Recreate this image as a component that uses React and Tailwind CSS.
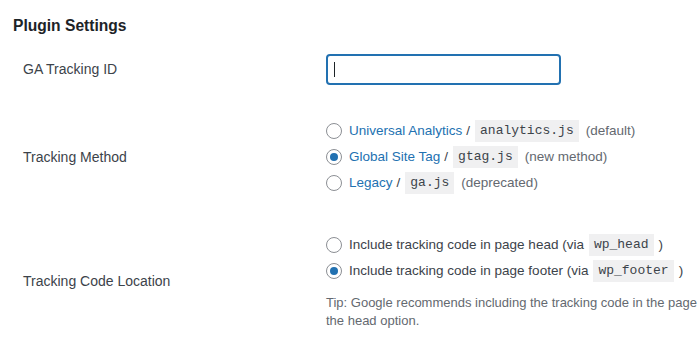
import React from "react";

const sans = { fontFamily: '"Liberation Sans", Arial, sans-serif' };

function Radio({ checked }) {
  return (
    <span className="inline-flex h-4 w-4 shrink-0 items-center justify-center rounded-full border border-[#8c8f94] bg-white">
      {checked && <span className="h-2 w-2 rounded-full bg-[#2271b1]" />}
    </span>
  );
}

function Code({ children }) {
  return (
    <code className="mx-[5px] inline-flex h-[22px] items-center bg-[#f0f0f1] px-[5px] font-['Liberation_Mono',monospace] text-[13px] text-[#3c434a]">
      {children}
    </code>
  );
}

export default function App() {
  return (
    <div
      className="h-[349px] w-[699px] overflow-hidden bg-white text-[#3c434a]"
      style={sans}
    >
      <div className="pl-[13px] pt-[16px]">
        <h2 className="text-[15.6px] font-bold leading-[20px] text-[#1d2327]">
          Plugin Settings
        </h2>

        {/* Row 1 */}
        <div className="mt-[18px] flex items-center">
          <div className="w-[313px] pl-[10px] text-[14px]">GA Tracking ID</div>
          <div className="flex h-[31px] w-[235px] items-center rounded-[4px] border-2 border-[#2271b1] pl-[6px]">
            <span className="h-[15px] w-px bg-[#1d2327]" />
          </div>
        </div>

        {/* Row 2 */}
        <div className="mt-[33px] flex items-center">
          <div className="w-[313px] pl-[10px] text-[14px]">Tracking Method</div>
          <div className="flex flex-col text-[13.5px]">
            <div className="flex h-[26px] items-center">
              <Radio />
              <span className="ml-[7px] text-[#2271b1]">Universal Analytics</span>
              <span className="ml-[4px]">/</span>
              <Code>analytics.js</Code>
              <span className="ml-[2px] text-[#646970]">(default)</span>
            </div>
            <div className="flex h-[26px] items-center">
              <Radio checked />
              <span className="ml-[7px] text-[#2271b1]">Global Site Tag</span>
              <span className="ml-[4px]">/</span>
              <Code>gtag.js</Code>
              <span className="ml-[2px] text-[#646970]">(new method)</span>
            </div>
            <div className="flex h-[26px] items-center">
              <Radio />
              <span className="ml-[7px] text-[#2271b1]">Legacy</span>
              <span className="ml-[4px]">/</span>
              <Code>ga.js</Code>
              <span className="ml-[2px] text-[#646970]">(deprecated)</span>
            </div>
          </div>
        </div>

        {/* Row 3 */}
        <div className="mt-[36px] flex items-center">
          <div className="w-[313px] shrink-0 pl-[10px] text-[14px]">Tracking Code Location</div>
          <div className="flex flex-col text-[13.5px]">
            <div className="flex h-[26px] items-center whitespace-nowrap">
              <Radio />
              <span className="ml-[7px]">Include tracking code in page head (via</span>
              <Code>wp_head</Code>
              <span>)</span>
            </div>
            <div className="flex h-[26px] items-center whitespace-nowrap">
              <Radio checked />
              <span className="ml-[7px]">Include tracking code in page footer (via</span>
              <Code>wp_footer</Code>
              <span>)</span>
            </div>
            <p className="mt-[10px] whitespace-nowrap text-[13px] leading-[18px] text-[#646970]">
              Tip: Google recommends including the tracking code in the page head, but including it in the footer can improve page performance. If in doubt, go with
              <br />
              the head option.
            </p>
          </div>
        </div>
      </div>
    </div>
  );
}
